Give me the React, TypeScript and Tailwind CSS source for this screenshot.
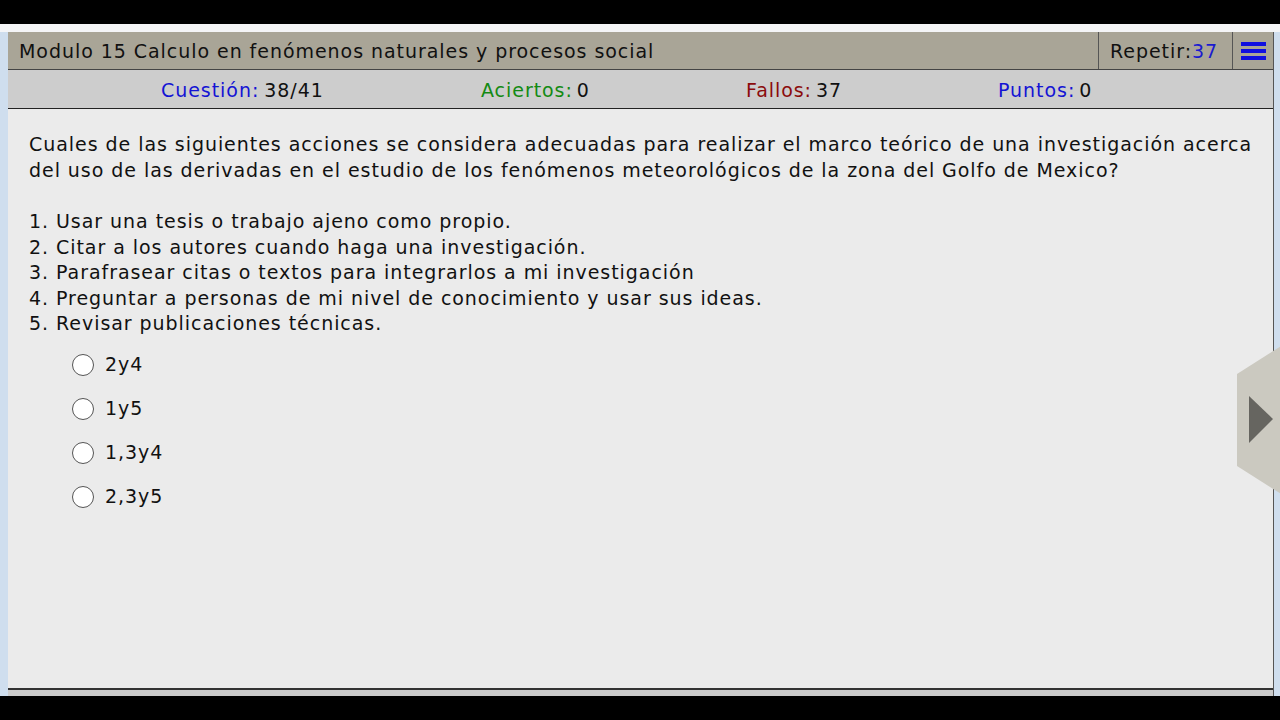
import React from "react";

const opts = ["2y4", "1y5", "1,3y4", "2,3y5"];

export default function App() {
  return (
    <div className="w-[1280px] h-[720px] bg-black flex flex-col overflow-hidden tracking-[0.95px]" style={{ fontFamily: '"DejaVu Sans", Verdana, sans-serif' }}>
      <div className="h-[24px] shrink-0 bg-black" />
      <div className="h-[8px] shrink-0 bg-[#f4f5f7]" />
      <div className="flex h-[664px] shrink-0 bg-[#cfdeee]">
        <div className="w-[8px] shrink-0" />
        <div className="w-[1266px] shrink-0 flex flex-col bg-[#ebebeb] border-r border-[#555]">
          <div className="h-[38px] shrink-0 flex bg-[#a9a597] border-b border-[#444] text-[19px] text-[#111]">
            <div className="flex-1 pl-[11px] pt-[1px] flex items-center whitespace-nowrap">Modulo 15 Calculo en fenómenos naturales y procesos social</div>
            <div className="w-[134px] border-l border-[#555] flex items-center pl-[11px] pt-[1px] whitespace-nowrap">Repetir:<span className="text-[#1a1ad0]">37</span></div>
            <div className="w-[41px] border-l border-[#555] flex items-center justify-center">
              <div className="flex flex-col gap-[3px]">
                <div className="w-[25px] h-[4px] bg-[#1010e0]" />
                <div className="w-[25px] h-[4px] bg-[#1010e0]" />
                <div className="w-[25px] h-[4px] bg-[#1010e0]" />
              </div>
            </div>
          </div>
          <div className="h-[39px] shrink-0 flex items-center bg-[#cdcdcd] border-b border-[#222] text-[19px] text-[#111] pl-[153px] pt-[3px] whitespace-nowrap">
            <div className="w-[320px]"><span className="text-[#1414d4]">Cuestión:</span><span className="ml-[5px]">38/41</span></div>
            <div className="w-[265px]"><span className="text-[#138a13]">Aciertos:</span><span className="ml-[4px]">0</span></div>
            <div className="w-[252px]"><span className="text-[#8b0c0c]">Fallos:</span><span className="ml-[4px]">37</span></div>
            <div><span className="text-[#1414d4]">Puntos:</span><span className="ml-[4px]">0</span></div>
          </div>
          <div className="relative flex-1 pl-[21px] pt-[23px] text-[19px] leading-[25.5px] text-[#111] whitespace-nowrap">
            <div>Cuales de las siguientes acciones se considera adecuadas para realizar el marco teórico de una investigación acerca</div>
            <div>del uso de las derivadas en el estudio de los fenómenos meteorológicos de la zona del Golfo de Mexico?</div>
            <div className="h-[26px]" />
            <div>1. Usar una tesis o trabajo ajeno como propio.</div>
            <div>2. Citar a los autores cuando haga una investigación.</div>
            <div>3. Parafrasear citas o textos para integrarlos a mi investigación</div>
            <div>4. Preguntar a personas de mi nivel de conocimiento y usar sus ideas.</div>
            <div>5. Revisar publicaciones técnicas.</div>
            <div className="flex flex-col pl-[43px] pt-[17px] gap-[22px]">
              {opts.map((o) => (
                <div key={o} className="flex items-center h-[22px]">
                  <div className="w-[22px] h-[22px] rounded-full border-[1.5px] border-[#555] bg-white" />
                  <span className="ml-[11px]">{o}</span>
                </div>
              ))}
            </div>
            <svg className="absolute right-[-8px] top-[237px]" width="44" height="148" viewBox="0 0 44 148">
              <polygon points="0,28 44,0 44,148 0,120" fill="#cbc9c0" />
              <polygon points="12,50 36,73 12,97" fill="#666560" />
            </svg>
          </div>
          <div className="h-[2px] shrink-0 bg-[#333]" />
          <div className="h-[6px] shrink-0 bg-[#cccccc]" />
        </div>
        <div className="flex-1" />
      </div>
    </div>
  );
}
